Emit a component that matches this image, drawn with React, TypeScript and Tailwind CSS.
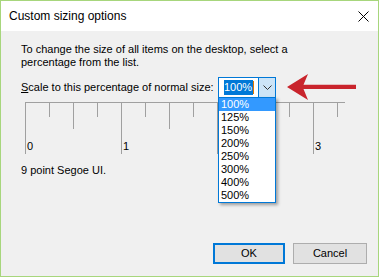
import React from "react";

const options = ["100%", "125%", "150%", "200%", "250%", "300%", "400%", "500%"];

function Ruler() {
  // 24px per tick, 96px per unit
  const ticks = Array.from({ length: 14 }, (_, i) => i);
  return (
    <svg width="322" height="52" className="block">
      <line x1="0" y1="0.5" x2="320" y2="0.5" stroke="#a0a0a0" strokeWidth="1" />
      {ticks.map((i) => {
        const len = i % 4 === 0 ? 52 : i % 2 === 0 ? 27 : 15;
        return <line key={i} x1={i * 24 + 0.5} y1="0" x2={i * 24 + 0.5} y2={len} stroke="#a0a0a0" strokeWidth="1" />;
      })}
    </svg>
  );
}

export default function App() {
  return (
    <div className="w-[380px] h-[277px] bg-white overflow-hidden" style={{ fontFamily: '"Liberation Sans", Arial, sans-serif' }}>
      <div className="relative w-[379px] h-[277px] border border-[#a7d67c] flex flex-col bg-[#f0f0f0] text-black">
        {/* title bar */}
        <div className="h-[30px] shrink-0 bg-white flex items-center justify-between pl-[8px] pr-[9px]">
          <span className="text-[12px]">Custom sizing options</span>
          <svg width="11" height="11" viewBox="0 0 11 11">
            <path d="M0.5 0.5 L10.5 10.5 M10.5 0.5 L0.5 10.5" stroke="#000" strokeWidth="1" />
          </svg>
        </div>

        {/* body */}
        <div className="flex flex-col pl-[20px] pt-[12px] text-[11px] leading-[13px]">
          <p>To change the size of all items on the desktop, select a<br />percentage from the list.</p>

          <div className="relative z-10 flex items-center mt-[8px]">
            <span className="w-[197px]">
              <span className="underline">S</span>cale to this percentage of normal size:
            </span>
            <div className="relative">
              <div className="w-[58px] h-[21px] border border-[#0078d7] bg-white flex">
                <div className="flex-1 flex items-center pl-[5px]">
                  <span className="bg-[#0078d7] text-white leading-[15px] pr-[1px]">100%</span>
                  <span className="w-[1px] h-[13px] bg-[#e07800]" />
                </div>
                <div className="w-[17px] border-l border-[#0078d7] bg-[#cce4f7] flex items-center justify-center">
                  <svg width="9" height="5" viewBox="0 0 9 5">
                    <path d="M0.5 0.5 L4.5 4.5 L8.5 0.5" stroke="#333" fill="none" strokeWidth="1" />
                  </svg>
                </div>
              </div>
              {/* open list */}
              <div className="absolute left-0 top-[20px] w-[58px] border border-[#0078d7] bg-white shadow-[2px_2px_3px_rgba(0,0,0,0.35)]">
                {options.map((o, i) => (
                  <div
                    key={o}
                    className={`h-[13px] leading-[13px] pl-[2px] ${i === 0 ? "bg-[#3399ff] text-white" : "text-black"}`}
                  >
                    {o}
                  </div>
                ))}
              </div>
            </div>
          </div>

          {/* ruler */}
          <div className="ml-[4px] mt-[4px]">
            <Ruler />
            <div className="flex -mt-[14px] pl-[2px]">
              <span className="w-[96px] shrink-0">0</span>
              <span className="w-[96px] shrink-0">1</span>
              {/* "2" sits under the open list */}
              <span className="w-[96px] shrink-0" />
              <span>3</span>
            </div>
          </div>

          <p className="mt-[11px]">9 point Segoe UI.</p>
        </div>

        {/* buttons */}
        <div className="mt-auto flex justify-end gap-[8px] pr-[11px] pb-[12px] text-[11px]">
          <button className="w-[72px] h-[21px] border-2 border-[#0078d7] bg-[#e1e1e1]">OK</button>
          <button className="w-[74px] h-[21px] border border-[#adadad] bg-[#e1e1e1]">Cancel</button>
        </div>

        {/* red annotation arrow */}
        <svg className="absolute left-[284px] top-[70px] z-20" width="74" height="30" viewBox="0 0 74 30">
          <path d="M2 16 L23 3 L18.5 13.8 L71 13.8 L71 18 L18.5 18 L23 29 Z" fill="#c9242c" />
        </svg>
      </div>
    </div>
  );
}
